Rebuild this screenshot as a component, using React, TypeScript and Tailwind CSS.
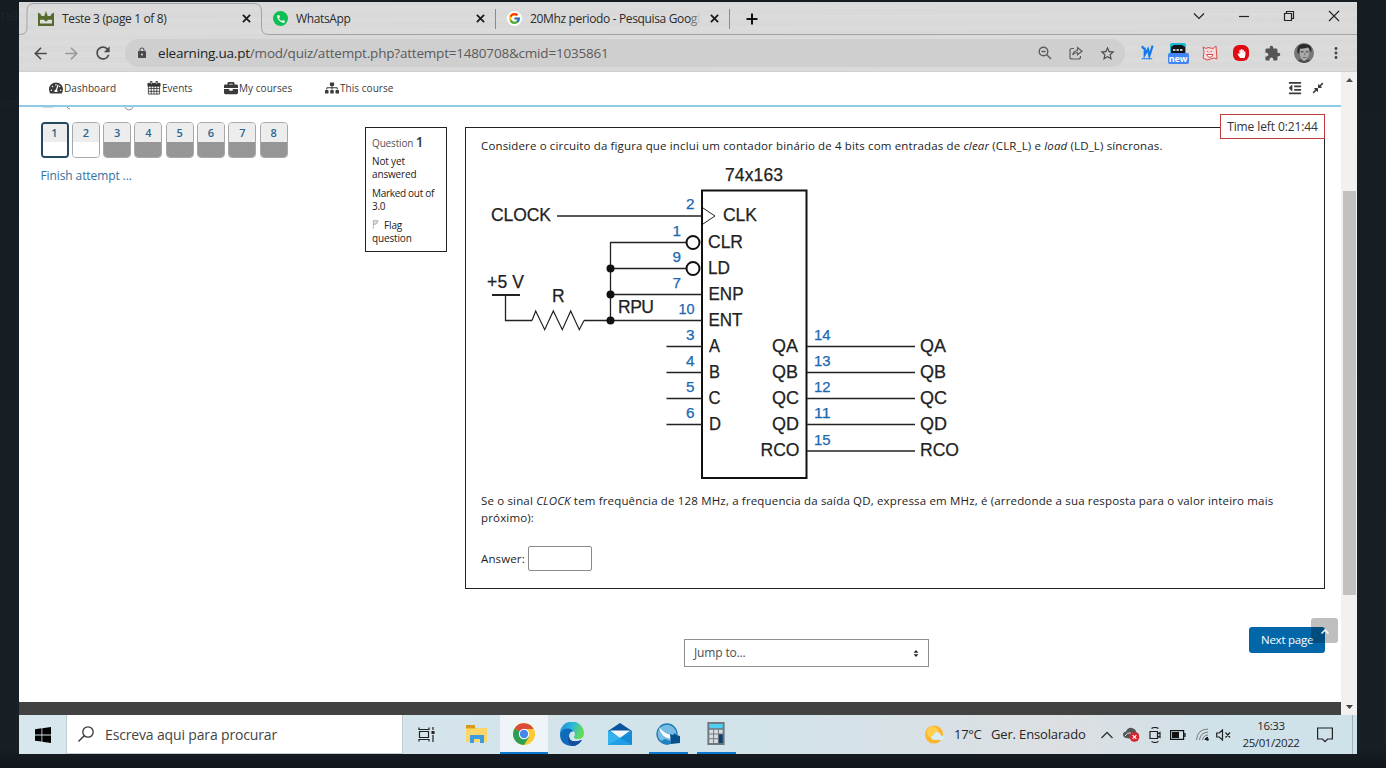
import React from 'react';
import { FaBriefcase, FaCompressAlt, FaOutdent, FaSitemap, FaTachometerAlt, FaHandPaper } from 'react-icons/fa';
import {
  MdArrowBack,
  MdArrowForward,
  MdCall,
  MdExtension,
  MdLock,
  MdMoreVert,
  MdRefresh,
  MdStarBorder,
} from 'react-icons/md';
import { FcGoogle } from 'react-icons/fc';

const METAL =
  'bg-[#d9d9d9] bg-[repeating-linear-gradient(179.7deg,#dbdbdb_0px,#d7d7d7_2px,#dadada_3px,#d8d8d8_5px,#dcdcdc_7px,#dadada_11px)]';

function TabClose() {
  return (
    <svg viewBox="0 0 10 10" className="size-[9px] shrink-0 text-[#1b1b1b]">
      <path d="M1 1l8 8M9 1l-8 8" stroke="currentColor" strokeWidth="2" fill="none" />
    </svg>
  );
}

function TabStrip() {
  return (
    <div className="relative flex h-[33px] shrink-0 items-center text-[12px] leading-[16px] text-[#2b2b2b]">
      <svg className="absolute inset-0" width="1338" height="34" fill="none" stroke="#a3a3a3">
        <path d="M0 32.5h1q7 0 7-7V9q0-7.500 7-7.500h220q7.500 0 7.500 7.500v16.500q0 7 7 7H1338" />
      </svg>
      <div className="relative flex w-[243px] items-center pl-[19px]">
        <svg viewBox="0 0 16 15" className="h-[15px] w-[16px] shrink-0" fill="#566b2b">
          <path d="M0 1.500L2.500 3l1 2h2.800L8 0l1.700 5h2.800l1-2L16 1.500V15H0z" />
          <path d="M2 8.800h4.300Q6.500 10.500 8 10.500T9.700 8.800H14v3.700H2z" fill="#dedede" />
        </svg>
        <span className="ml-[8px] w-[180px] whitespace-nowrap tracking-[-0.35px]">Teste 3 (page 1 of 8)</span>
        <TabClose />
      </div>
      <div className="relative flex h-[20px] w-[234px] items-center border-r border-[#8b8b8b] pl-[11px]">
        <span className="flex size-[15px] shrink-0 items-center justify-center rounded-full bg-[#0cbf52] text-white">
          <MdCall size={10} />
        </span>
        <span className="ml-[8px] w-[180px] tracking-[-0.35px]">WhatsApp</span>
        <TabClose />
      </div>
      <div className="relative flex h-[20px] w-[234px] items-center border-r border-[#8b8b8b] pl-[11px]">
        <span className="flex size-[15px] shrink-0 items-center justify-center rounded-full bg-white">
          <FcGoogle size={13} />
        </span>
        <span className="ml-[8px] w-[180px] whitespace-nowrap tracking-[-0.35px]">
          20Mhz periodo - Pesquisa Goo<span className="text-[#777]">g</span>
          <span className="text-[#c4c4c4]">l</span>
        </span>
        <TabClose />
      </div>
      <svg viewBox="0 0 12 12" className="relative ml-[16px] size-[12px]" stroke="#111" strokeWidth="2">
        <path d="M6 .5v11M.5 6h11" />
      </svg>
      <div className="relative mb-[5px] ml-auto flex items-center text-[#222]">
        <svg viewBox="0 0 12 12" className="size-[12px]" fill="none" stroke="currentColor" strokeWidth="1.200">
          <path d="M1 3.500l5 5 5-5" />
        </svg>
        <svg viewBox="0 0 12 12" className="ml-[33px] size-[12px]" fill="none" stroke="currentColor" strokeWidth="1.200">
          <path d="M1 6.500h10" />
        </svg>
        <svg viewBox="0 0 12 12" className="ml-[33px] size-[12px]" fill="none" stroke="currentColor" strokeWidth="1.200">
          <path d="M1.500 3.500h7v7h-7zM3.500 3.500v-2h7v7h-2" />
        </svg>
        <svg viewBox="0 0 12 12" className="ml-[33px] mr-[17px] size-[12px]" fill="none" stroke="currentColor" strokeWidth="1.100">
          <path d="M1 1l10 10M11 1L1 11" />
        </svg>
      </div>
    </div>
  );
}

function Toolbar() {
  return (
    <div className="flex h-[37px] shrink-0 items-center border-b border-[#d0d0d0] text-[#4a4a4a]">
      <MdArrowBack size={19} className="ml-[12px]" />
      <MdArrowForward size={19} className="ml-[12px] text-[#989898]" />
      <MdRefresh size={20} className="ml-[12px]" />
      <div className="ml-[12px] flex h-[28px] w-[1000px] items-center rounded-full bg-[#cfcfcf] pl-[11px] pr-[9px]">
        <MdLock size={12} />
        <span className="ml-[10px] whitespace-nowrap text-[13.500px] tracking-[-0.200px] text-[#5b5b5b]">
          <span className="text-[#222]">elearning.ua.pt</span>/mod/quiz/attempt.php?attempt=1480708&amp;cmid=1035861
        </span>
        <svg viewBox="0 0 14 14" className="ml-auto size-[14px]" fill="none" stroke="#5c5c5c" strokeWidth="1.400">
          <circle cx="5.500" cy="5.500" r="4.300" />
          <path d="M3.500 5.500h4M8.800 8.800l4.200 4.200" />
        </svg>
        <svg viewBox="0 0 14 14" className="ml-[17px] size-[14px]" fill="none" stroke="#5c5c5c" strokeWidth="1.200">
          <path d="M5 2.500H3q-2 0-2 2V11q0 2 2 2h6.500q2 0 2-2v-1M3.800 9q.4-4 4.700-4.500v-3L13 5.200 8.500 8.800V6.500Q5.500 6.500 3.800 9z" />
        </svg>
        <MdStarBorder size={17} className="ml-[16px]" />
      </div>
      <svg viewBox="0 0 14 16" className="ml-[16px] h-[16px] w-[13px]" fill="none" stroke="#1379ea" strokeWidth="2">
        <path d="M1 .5l2 3M4 2v8l3.500-6 1.500 7L12.500 0" strokeWidth="2.300" />
        <path d="M1 14h11" strokeWidth="1.200" strokeDasharray="1.500 .5" />
      </svg>
      <span className="ml-[13px] flex w-[22px] flex-col items-center">
        <svg viewBox="0 0 16 10" className="h-[10px] w-[16px]">
          <path d="M0 10V2q0-2 2-2h12q2 0 2 2v8z" fill="#18b9d4" />
          <path d="M1 4l3-2h8l3 2v6H1z" fill="#101418" />
          <path d="M3 7h10" stroke="#fff" strokeWidth="1.600" strokeDasharray="2.500 1" />
        </svg>
        <span className="flex h-[11px] w-[21px] items-center justify-center rounded-[2px] bg-[#4285f4] text-[9px] font-bold leading-none tracking-[-0.2px] text-white">
          new
        </span>
      </span>
      <svg viewBox="0 0 16 16" className="ml-[13px] size-[16px]" fill="#f3dcdc" stroke="#d94d4d" strokeWidth="1">
        <path d="M1 2l3 1.500 2-1 5 1L14 1l1 13-3-1-7 2-4-2 1-6z" />
        <path d="M5 6l1.500 1M10 6l-1.500 1M4.500 9.500h6.500q-1 3-3.200 2.800T4.500 9.500z" fill="#fff" />
      </svg>
      <span className="ml-[15px] flex size-[16px] items-center justify-center rounded-[6px] bg-[#e00b12] text-white">
        <FaHandPaper size={9} />
      </span>
      <MdExtension size={17} className="ml-[15px] text-[#555]" />
      <svg viewBox="0 0 20 20" className="ml-[13px] size-[20px]">
        <defs>
          <clipPath id="avatar">
            <circle cx="10" cy="10" r="10" />
          </clipPath>
        </defs>
        <g clipPath="url(#avatar)">
          <rect width="20" height="20" fill="#777" />
          <path d="M1 20q2-4 9-4t9 4z" fill="#4a4a4a" />
          <path d="M5.500 7q0-4 5-4t5 5q0 4-1.500 6.500T10.500 18Q8 18 6.500 14T5.500 7z" fill="#a9a9a9" />
          <path d="M3.500 10Q2 1 10 1t7.500 7l-1.500 1q0-3.500-2-4.500Q9 6 6 5.500L5 11z" fill="#292929" />
          <path d="M6.800 8.800h2.700M11.800 8.800h2.700" stroke="#3d3d3d" strokeWidth="1" />
          <path d="M9 14.500h3.500M10.800 10v2.200" stroke="#6a6a6a" strokeWidth=".9" />
        </g>
      </svg>
      <MdMoreVert size={18} className="ml-[13px]" />
    </div>
  );
}

function CalendarIcon() {
  return (
    <svg viewBox="0 0 14 15" className="h-[14px] w-[14px]" fill="none" stroke="#333">
      <path d="M1 5.500v8.500h12V5.500M1 8h12M1 11h12M4 5v9M7 5v9M10 5v9" strokeWidth=".9" />
      <path d="M.5 2.500h13v3H.5z" fill="#333" />
      <path d="M4 0v4M10 0v4" strokeWidth="2.200" />
      <path d="M4 .8v2.600M10 .8v2.600" stroke="#fff" strokeWidth=".7" />
    </svg>
  );
}

function SiteNav() {
  return (
    <div className="flex h-[35px] shrink-0 items-center border-b-2 border-[#8fcbe6] pb-px pl-[30px] text-[10px] leading-[15px] text-[#3b3b3b]">
      <span className="flex w-[98px] items-center gap-px tracking-[0.05px]">
        <FaTachometerAlt size={14} />
        Dashboard
      </span>
      <span className="flex w-[77px] items-center gap-px">
        <CalendarIcon />
        Events
      </span>
      <span className="flex w-[101px] items-center gap-px tracking-[0.05px]">
        <FaBriefcase size={14} />
        My courses
      </span>
      <span className="flex items-center gap-px tracking-[0.05px]">
        <FaSitemap size={14} />
        This course
      </span>
      <FaOutdent size={14} className="ml-auto" />
      <FaCompressAlt size={12} className="ml-[10px] mr-[17px]" />
    </div>
  );
}

const NAV_ITEMS = [1, 2, 3, 4, 5, 6, 7, 8];

function QuizNav() {
  return (
    <div className="w-[346px] shrink-0 pl-[21.500px]">
      <svg width="100" height="15" className="block" fill="none">
        <path d="M1 .5h12" stroke="#c9deec" />
        <path d="M26 0q1 1.500 3 2M84 0q1 3 4 3t4-3" stroke="#8a949b" />
      </svg>
      <div className="flex gap-[3.300px]">
        {NAV_ITEMS.map((n) => (
          <div
            key={n}
            className={
              'flex h-[36px] w-[28px] flex-col overflow-hidden rounded-[4px] border text-center text-[11px] font-semibold text-[#2a6592] ' +
              (n === 1 ? 'border-2 border-[#23485f]' : 'border-[#a8a8a8]')
            }
          >
            <span className={'flex items-center justify-center bg-[#ededed] leading-[18px] ' + (n === 1 ? 'h-[18px]' : 'h-[19px]')}>
              {n}
            </span>
            <span className={n > 2 ? 'flex-1 bg-[#969696]' : 'flex-1 bg-white'} />
          </div>
        ))}
      </div>
      <div className="mt-[9px] text-[12px] leading-[18px] tracking-[-0.1px] text-[#33719f]">Finish attempt ...</div>
    </div>
  );
}

function QuestionInfo() {
  return (
    <div className="mt-[20px] flex h-[125px] w-[82px] shrink-0 flex-col border border-[#222] pl-[6px] pt-[4px] text-[10px] leading-[13px] tracking-[-0.150px] text-[#222]">
      <div className="h-[23px] whitespace-nowrap leading-[20px] text-[#555]">
        Question <b className="text-[13.500px] font-semibold text-[#333]">1</b>
      </div>
      <div className="h-[32px]">
        Not yet
        <br />
        answered
      </div>
      <div className="h-[32px] whitespace-nowrap tracking-[-0.300px]">
        Marked out of
        <br />
        3.0
      </div>
      <div>
        <svg viewBox="0 0 8 10" className="mr-[5px] inline h-[9px] w-[7px] align-baseline" fill="#ddd" stroke="#999" strokeWidth=".8">
          <path d="M1.500 10V.8q2.500-1 5.500 0L6 3l-1 1.500L1.500 5" />
        </svg>
        Flag
        <br />
        question
      </div>
    </div>
  );
}

type Pin = { n: string; label: string; y: number; x: number; w: number };

const LEFT_PINS: Pin[] = [
  { n: '2', label: 'CLK', y: 215.5, x: 723, w: 34 },
  { n: '1', label: 'CLR', y: 242.5, x: 708, w: 35 },
  { n: '9', label: 'LD', y: 268.5, x: 708, w: 22 },
  { n: '7', label: 'ENP', y: 294.5, x: 708.5, w: 35 },
  { n: '10', label: 'ENT', y: 320.5, x: 708.5, w: 34 },
  { n: '3', label: 'A', y: 346.5, x: 709, w: 11 },
  { n: '4', label: 'B', y: 372.5, x: 709, w: 11 },
  { n: '5', label: 'C', y: 398.5, x: 708.5, w: 12 },
  { n: '6', label: 'D', y: 424.5, x: 709, w: 12 },
];

const RIGHT_PINS: Pin[] = [
  { n: '14', label: 'QA', y: 346.5, x: 772, w: 26 },
  { n: '13', label: 'QB', y: 372.5, x: 772, w: 26 },
  { n: '12', label: 'QC', y: 398.5, x: 772, w: 27 },
  { n: '11', label: 'QD', y: 424.5, x: 772, w: 27 },
  { n: '15', label: 'RCO', y: 451, x: 760.5, w: 39 },
];

function Circuit() {
  return (
    <svg
      width="500"
      height="325"
      viewBox="481 160 500 325"
      fill="none"
      stroke="#222"
      strokeWidth="1.300"
      className="block [font-family:'Liberation_Sans',Arial,sans-serif]"
    >
      <rect x="702" y="190.500" width="104.500" height="287.500" strokeWidth="2" stroke="#111" />
      <path d="M557 216H702M610.500 242.500H686M610.500 268.500H686M610.500 294.500H702M584 320.500H702M610.500 242V320.500" />
      <path d="M703 208l12 8-12 8" strokeWidth="1" />
      <path d="M505.500 295v25.500H532" />
      <path d="M492 295h28" strokeWidth="2" />
      <path d="M532 320.500l3.700-9.500 9 18.700 8.600-18.700 9 18.700 8.400-18.700 8.600 18.700 4.700-9.200" strokeWidth="1.200" />
      {LEFT_PINS.slice(5).map((p) => (
        <path key={p.n} d={`M666.500 ${p.y}H702`} />
      ))}
      {RIGHT_PINS.map((p) => (
        <path key={p.n} d={`M807 ${p.y}H915`} />
      ))}
      <g strokeWidth="2" stroke="#111" fill="#fff">
        <circle cx="693" cy="242.500" r="6.500" />
        <circle cx="693" cy="268.500" r="6.500" />
      </g>
      <g fill="#111" stroke="none">
        <circle cx="610.500" cy="268.500" r="4" />
        <circle cx="610.500" cy="294.500" r="4" />
        <circle cx="610.500" cy="320.500" r="4" />
      </g>
      <g stroke="#222" strokeWidth=".25" fill="#222" fontSize="17.500">
        <text x="725" y="180.500" textLength="58">74x163</text>
        <text x="491" y="221" textLength="60">CLOCK</text>
        <text x="487" y="287.500" textLength="37">+5 V</text>
        <text x="552" y="301.500">R</text>
        <text x="618" y="312.500" textLength="36">RPU</text>
        {LEFT_PINS.map((p) => (
          <text key={p.label} x={p.x} y={p.y + 5} textLength={p.w} lengthAdjust="spacingAndGlyphs">
            {p.label}
          </text>
        ))}
        {RIGHT_PINS.map((p) => (
          <React.Fragment key={p.label}>
            <text x={p.x} y={p.y + 5} textLength={p.w} lengthAdjust="spacingAndGlyphs">
              {p.label}
            </text>
            <text x="920" y={p.y + 5} textLength={p.w} lengthAdjust="spacingAndGlyphs">
              {p.label}
            </text>
          </React.Fragment>
        ))}
      </g>
      <g stroke="#1c68b0" strokeWidth=".25" fill="#1c68b0" fontSize="14">
        {LEFT_PINS.map((p) => (
          <text
            key={p.n}
            x={p.n === '1' || p.n === '9' || p.n === '7' ? 681 : 694.5}
            y={p.y - 6.5}
            textAnchor="end"
            textLength={p.n === '10' ? 16 : 8.5}
            lengthAdjust="spacingAndGlyphs"
          >
            {p.n}
          </text>
        ))}
        {RIGHT_PINS.map((p) => (
          <text key={p.n} x="814" y={p.y - 6.5} textLength="16.500" lengthAdjust="spacingAndGlyphs">
            {p.n}
          </text>
        ))}
      </g>
    </svg>
  );
}

function QuestionBody() {
  return (
    <div className="ml-[17.500px] mt-[20px] h-[461.500px] w-[860px] border border-[#222] pl-[15.500px] pt-[9px] text-[11.500px] leading-[17px] text-[#1d1d1d]">
      <p className="whitespace-nowrap leading-[18px] tracking-[0.142px]">
        Considere o circuito da figura que inclui um contador binário de 4 bits com entradas de <i>clear</i> (CLR_L) e{' '}
        <i>load</i> (LD_L) síncronas.
      </p>
      <div className="mt-[5px]">
        <Circuit />
      </div>
      <p className="mt-[7px] whitespace-nowrap tracking-[0.160px]">
        Se o sinal <i>CLOCK</i> tem frequência de 128 MHz, a frequencia da saída QD, expressa em MHz, é (arredonde a sua
        resposta para o valor inteiro mais
        <br />
        próximo):
      </p>
      <div className="mt-[20px] flex items-center gap-[3px]">
        <label htmlFor="answer" className="tracking-[0.140px]">
          Answer:
        </label>
        <input id="answer" className="h-[25px] w-[64px] rounded-[2px] border border-[#8a8a8a] bg-white" />
      </div>
    </div>
  );
}

function Content() {
  return (
    <div className="flex h-[643px] shrink-0 bg-white">
      <div className="flex w-[1322px] flex-col">
        <SiteNav />
        <div className="relative flex h-[595px] flex-col">
          <div className="flex">
            <QuizNav />
            <QuestionInfo />
            <QuestionBody />
          </div>
          <div className="absolute right-[16px] top-[7px] flex h-[25px] w-[105px] items-center justify-center whitespace-nowrap border border-[#c0393b] bg-white text-[12px] tracking-[-0.1px] text-[#333]">
            Time left 0:21:44
          </div>
          <div className="mt-[38.500px] flex items-start pl-[665px]">
            <div className="mt-[12px] flex h-[28px] w-[245px] items-center justify-between border border-[#8a8f94] pl-[9px] pr-[9px] text-[12px] tracking-[-0.150px] text-[#495057]">
              Jump to...
              <svg viewBox="0 0 6 8" className="h-[7px] w-[6px]" fill="#222">
                <path d="M3 0l2.700 3.200H.3zM3 8L.3 4.800h5.400z" />
              </svg>
            </div>
            <div className="relative ml-[320px] flex h-[26px] w-[76px] items-center whitespace-nowrap rounded-[3px] bg-[#0267a9] pl-[12px] text-[11.500px] tracking-[-0.250px] text-white">
              Next page
              <span className="absolute left-[62px] top-[-9px] flex h-[25px] w-[27px] justify-center rounded-[3px] bg-black/25 pt-[11px]">
                <svg viewBox="0 0 8 5" className="h-[5px] w-[8px]" fill="none" stroke="#fff" strokeWidth="1.500">
                  <path d="M.5 4.500L4 1l3.500 3.500" />
                </svg>
              </span>
            </div>
          </div>
        </div>
        <div className="h-[13px] bg-[#424242]" />
      </div>
      <div className="flex w-[16px] flex-col items-center justify-between bg-[#f1f1f1] py-[6px]">
        <svg viewBox="0 0 7 4" className="h-[4px] w-[7px]" fill="#505050">
          <path d="M0 4l3.500-4L7 4z" />
        </svg>
        <div className="mb-[90px] mt-auto h-[404px] w-[13px] bg-[#c1c1c1]" />
        <svg viewBox="0 0 7 4" className="mt-[20px] h-[4px] w-[7px]" fill="#404040">
          <path d="M0 0l3.500 4L7 0z" />
        </svg>
      </div>
    </div>
  );
}

function TaskButton({ children, open, active }: { children: React.ReactNode; open?: boolean; active?: boolean }) {
  return (
    <div className={'flex h-[39px] w-[48px] shrink-0 flex-col items-center ' + (active ? 'bg-[#eef4f7]' : '')}>
      <div className="flex h-[37px] items-center">{children}</div>
      <div className={'h-[2px] ' + (active ? 'w-full bg-[#0b78d0]' : open ? 'w-[39px] bg-[#0b78d0]' : '')} />
    </div>
  );
}

function Taskbar() {
  return (
    <div className="flex h-[39px] shrink-0 items-center bg-[linear-gradient(90deg,#d8e6ee,#d2e3ea_55%,#dcdfe2_78%,#cfe1e9_90%)] text-[#252525]">
      <div className="flex w-[47px] justify-center">
        <svg viewBox="0 0 16 16" className="size-[16px]" fill="#000">
          <path d="M0 2.200L6.500 1.300v6.200H0zM7.300 1.200L16 0v7.500H7.300zM0 8.400h6.500v6.200L0 13.700zM7.300 8.400H16V16l-8.700-1.200z" />
        </svg>
      </div>
      <div className="flex h-[39px] w-[337px] items-center border border-t-0 border-[#c3ccd1] bg-white pl-[11px] text-[14px] tracking-[-0.150px] text-[#444]">
        <svg viewBox="0 0 16 16" className="size-[16px]" fill="none" stroke="#333" strokeWidth="1.300">
          <circle cx="10" cy="6" r="5.200" />
          <path d="M6.200 9.800L.5 15.500" />
        </svg>
        <span className="ml-[11px]">Escreva aqui para procurar</span>
      </div>
      <div className="flex w-[49px] justify-center pr-[2px]">
        <svg viewBox="0 0 17 15" className="h-[15px] w-[17px]" fill="none" stroke="#222" strokeWidth="1.200">
          <path d="M1 .5v2h10v-2M1 14.500v-2h10v2M1.500 4.500h9v6h-9zM15 0v3M15 8v7" />
          <path d="M13.500 4h3v3h-3z" fill="#222" stroke="none" />
        </svg>
      </div>
      <TaskButton>
        <svg viewBox="0 0 21 18" className="h-[18px] w-[21px]">
          <path d="M0 1h8l1.500 2H20v14H0z" fill="#f3bd3c" />
          <path d="M0 4h9l2-1h10v14H0z" fill="#fbd668" />
          <path d="M0 0h9v3H0z" fill="#d89a1d" />
          <path d="M4 18v-8h14v8h-4v-4H8v4z" fill="#3d9be0" />
        </svg>
      </TaskButton>
      <TaskButton active open>
        <svg viewBox="0 0 22 22" className="size-[22px]">
          <circle cx="11" cy="11" r="11" fill="#fbc934" />
          <path d="M11 11L1.500 5.500A11 11 0 0 0 11 22l5-8z" fill="#2d9f52" />
          <path d="M11 11L1.500 5.500A11 11 0 0 1 20.600 6H11z" fill="#dc4a3d" />
          <circle cx="11" cy="11" r="5.200" fill="#fff" />
          <circle cx="11" cy="11" r="4.200" fill="#4587ec" />
        </svg>
      </TaskButton>
      <TaskButton>
        <svg viewBox="0 0 24 24" className="size-[24px]">
          <defs>
            <linearGradient id="edge" x1="0" y1="0" x2="1" y2=".3">
              <stop offset="0" stopColor="#1b8bd8" />
              <stop offset=".55" stopColor="#2fb8d8" />
              <stop offset="1" stopColor="#62dc58" />
            </linearGradient>
          </defs>
          <path d="M0 12a12 12 0 0 1 24-1q0 6-6 6-4.500 0-4-2.500 2-2 0-5Q9 4 0 12z" fill="url(#edge)" />
          <path d="M0 12q2-5.500 8-5.500 4 0 5.500 3-4-.5-4.500 4.500 0 8 13 4Q18 24 12 24 0 23.500 0 12z" fill="#0f6cbd" />
          <path d="M9 14q0 8 13 4-4 6-10 6-6-3-3-10z" fill="#134f9c" />
        </svg>
      </TaskButton>
      <TaskButton>
        <svg viewBox="0 0 24 22" className="h-[22px] w-[24px]">
          <path d="M0 8l12-8 12 8v2H0z" fill="#0b549f" />
          <path d="M0 8h24v14H0z" fill="#1f9fe6" />
          <path d="M2 7.500h20L12 15z" fill="#f4f8fb" />
          <path d="M0 8l12 7L0 22z" fill="#34b3f1" />
          <path d="M24 8v14L12 15z" fill="#168bd6" />
        </svg>
      </TaskButton>
      <TaskButton open>
        <svg viewBox="0 0 24 22" className="h-[22px] w-[24px]">
          <circle cx="11" cy="11" r="10" fill="#77bce4" stroke="#2079b4" strokeWidth="1.300" />
          <path d="M3 4q5 7 13 8v4Q5 15 3 4z" fill="#fff" />
          <path d="M9 21q5 1 8-2l-8-3-4 2z" fill="#1b82be" />
          <path d="M14 11l3 1 2-2 1 2 4 1v7l-9 1z" fill="#07528c" />
        </svg>
      </TaskButton>
      <TaskButton open>
        <svg viewBox="0 0 18 24" className="h-[23px] w-[18px]">
          <path d="M0 0h18v24H0z" fill="#6d7880" />
          <path d="M2 2h14v4.500H2z" fill="#4fd0f2" />
          <path d="M2 8h4v4H2zM7 8h4v4H7zM12 8h4v4h-4zM2 13h4v4H2zM7 13h4v4H7zM2 18h4v4H2zM7 18h4v4H7z" fill="#d8dcdf" />
          <path d="M12 13h4v9h-4z" fill="#133f6d" />
        </svg>
      </TaskButton>
      <div className="ml-auto flex items-center">
        <svg viewBox="0 0 20 20" className="size-[19px]">
          <circle cx="9.500" cy="10" r="9.500" fill="#f9b62c" />
          <circle cx="8" cy="7.500" r="6" fill="#ffcf4d" />
          <path d="M9 15.500q-2.500 0-2.500-2.200T9 11q1-4 4.500-3.500T16.500 11q3 .2 3 2.400t-2.500 2.300z" fill="#d9eefb" />
        </svg>
        <span className="ml-[10px] w-[37px] text-[13px] tracking-[-0.300px]">17°C</span>
        <span className="w-[110px] whitespace-nowrap text-[13px] tracking-[-0.150px]">Ger. Ensolarado</span>
        <svg viewBox="0 0 12 8" className="h-[8px] w-[12px]" fill="none" stroke="#333" strokeWidth="1.300">
          <path d="M.5 7L6 1.500 11.500 7" />
        </svg>
        <svg viewBox="0 0 17 15" className="ml-[10px] h-[15px] w-[17px]">
          <path d="M3 11Q0 10 0 7.500T3 4.500Q5 0 9 1t4 4q3 1 3 4l-6 3z" fill="#555" />
          <path d="M2 9q2-4 6-3" stroke="#ddd" fill="none" />
          <circle cx="11.500" cy="10" r="4.800" fill="#d9232e" />
          <path d="M9.700 8.200l3.600 3.600M13.300 8.200l-3.600 3.600" stroke="#fff" strokeWidth="1.200" />
        </svg>
        <svg viewBox="0 0 12 16" className="ml-[9px] h-[16px] w-[12px]" fill="none" stroke="#222" strokeWidth="1.200">
          <path d="M1 4.500h7.500v7H1zM8.500 7L11 5.500v5L8.500 9M2.500 1.500Q6-.5 9.500 1.500M2.500 14.500q3.500 2 7 0" />
        </svg>
        <svg viewBox="0 0 16 10" className="ml-[9px] h-[10px] w-[16px]" fill="none" stroke="#111" strokeWidth="1.200">
          <path d="M.6.6h13v8.800H.6zM15 3v4" />
          <path d="M2 2h7v6H2z" fill="#111" stroke="none" />
        </svg>
        <svg viewBox="0 0 13 13" className="ml-[10px] size-[13px]" fill="none" stroke="#777" strokeWidth="1">
          <path d="M.5 12Q1 1.500 12 1M3.500 12Q4 5 12 4M6.500 12q.5-4.500 5.500-5" />
          <path d="M9.500 12q0-2 2.500-2.500" stroke="#111" strokeWidth="1.600" />
          <circle cx="11.500" cy="11.500" r="1.300" fill="#111" stroke="none" />
        </svg>
        <svg viewBox="0 0 15 12" className="ml-[7px] h-[12px] w-[15px]" fill="none" stroke="#222" strokeWidth="1.200">
          <path d="M.7 4h2.500L6.500 1v10L3.200 8H.7zM9.500 3.500l4.500 5M14 3.500l-4.500 5" />
        </svg>
        <div className="mt-[-2px] ml-[7px] flex w-[66px] flex-col items-center whitespace-nowrap text-[11.500px] leading-[17px] tracking-[-0.400px]">
          <span>16:33</span>
          <span>25/01/2022</span>
        </div>
        <svg viewBox="0 0 16 16" className="ml-[13px] size-[16px]" fill="none" stroke="#222" strokeWidth="1.200">
          <path d="M.6 1h14.800v11h-4.800L8 14.700 5.500 12H.6z" />
        </svg>
        <div className="ml-[19px] mr-[4px] h-[39px] w-px bg-[#a3b2ba]" />
      </div>
    </div>
  );
}

export default function App() {
  return (
    <div className="flex h-[768px] w-[1386px] overflow-hidden bg-[linear-gradient(180deg,#151c22_0%,#171e24_60%,#182026_97%,#10151a_100%)] pt-[2px] [font-family:'Open_Sans','Noto_Sans',sans-serif]">
      <div className="flex w-[19px] flex-col items-end pr-px text-[#1c242a]">
        <span className="text-[16px] leading-[26px] tracking-[-0.5px]">na</span>
        <span className="mt-[64px] text-[11px] leading-[20px] tracking-[-0.3px]">ten</span>
      </div>
      <div className="flex h-[752px] w-[1338px] flex-col overflow-hidden">
        <div className={METAL}>
          <TabStrip />
          <Toolbar />
        </div>
        <Content />
        <Taskbar />
      </div>
    </div>
  );
}
